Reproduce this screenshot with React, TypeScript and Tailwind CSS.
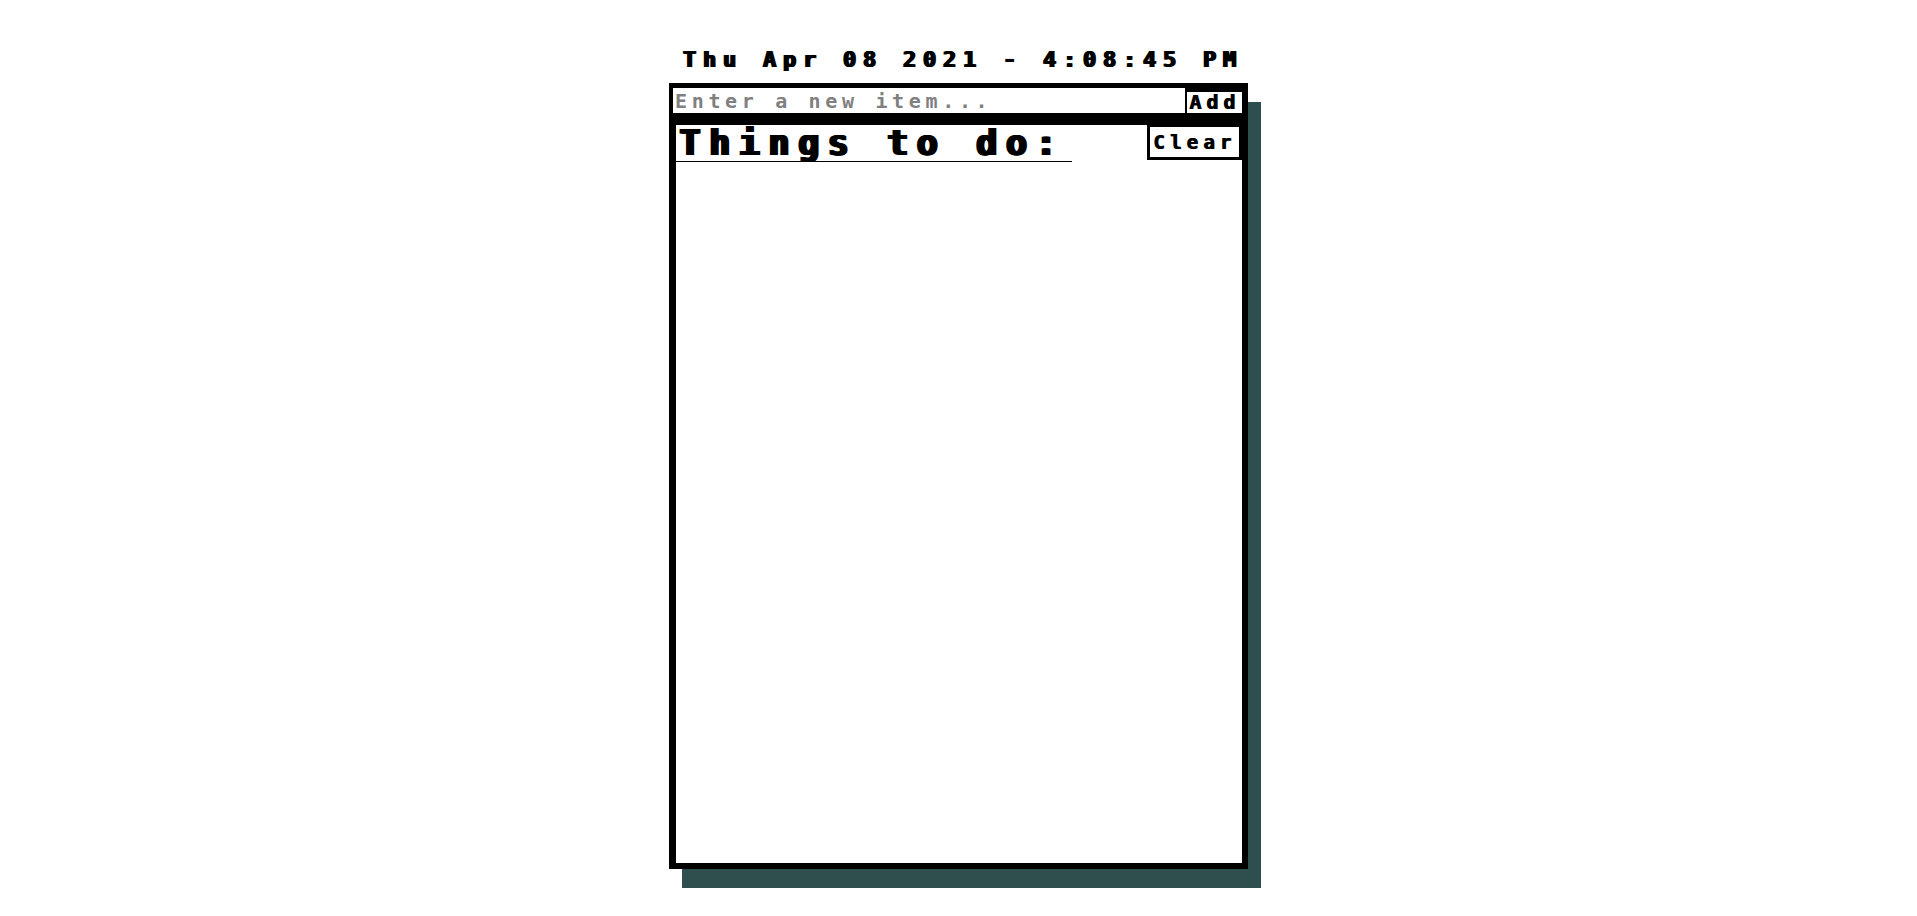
import React, { useState } from 'react';

const mono = "font-['DejaVu_Sans_Mono',monospace]";

export default function App() {
  const [items, setItems] = useState<string[]>([]);
  const [text, setText] = useState('');

  const add = () => {
    if (!text.trim()) return;
    setItems([...items, text.trim()]);
    setText('');
  };

  return (
    <div className={`flex min-h-screen flex-col items-center bg-white pt-[47px] text-black ${mono}`}>
      <div className="h-[26px] pl-[7px] text-[22px] font-bold leading-[26px] tracking-[6.76px] [text-shadow:1px_0_0_#000,2px_0_0_#000]">
        Thu Apr 08 2021 - 4:08:45 PM
      </div>

      <div className="mt-[10px] flex h-[786px] w-[579px] flex-col bg-black shadow-[13px_19px_0_#2f4f4f]">
        <div className="flex items-start pl-[4px] pr-[6px] pt-[5px]">
          <input
            value={text}
            onChange={(e) => setText(e.target.value)}
            onKeyDown={(e) => e.key === 'Enter' && add()}
            placeholder="Enter a new item..."
            className={`h-[25px] w-[512px] bg-white pl-[2px] text-[20px] font-bold tracking-[4.66px] outline-none placeholder:text-[#808080] ${mono}`}
          />
          <button
            onClick={add}
            className={`ml-[2px] mt-[4px] h-[21px] w-[55px] bg-white pl-[2px] text-left text-[20px] font-bold leading-[21px] tracking-[5px] [text-shadow:1px_0_0_#000] ${mono}`}
          >
            Add
          </button>
        </div>

        <div className="mb-[6px] ml-[7px] mr-[6px] mt-[12px] flex flex-1 flex-col bg-white">
          <div className="flex items-start justify-between">
            <h1 className="h-[37px] w-[396px] border-b border-black pl-[2px] text-[35px] font-bold leading-[36px] tracking-[8.6px] [text-shadow:1px_0_0_#000,2px_0_0_#000,3px_0_0_#000]">
              Things to do:
            </h1>
            <button
              onClick={() => setItems([])}
              className={`-mt-[1px] h-[36px] w-[95px] border-[3px] border-black bg-white pl-[3px] text-left text-[19px] font-bold tracking-[5.2px] [text-shadow:1px_0_0_#000] ${mono}`}
            >
              Clear
            </button>
          </div>
          <ul className="px-[4px] pt-[6px] text-[20px]">
            {items.map((item, i) => (
              <li key={i} className="tracking-[4px]">
                {item}
              </li>
            ))}
          </ul>
        </div>
      </div>
    </div>
  );
}
